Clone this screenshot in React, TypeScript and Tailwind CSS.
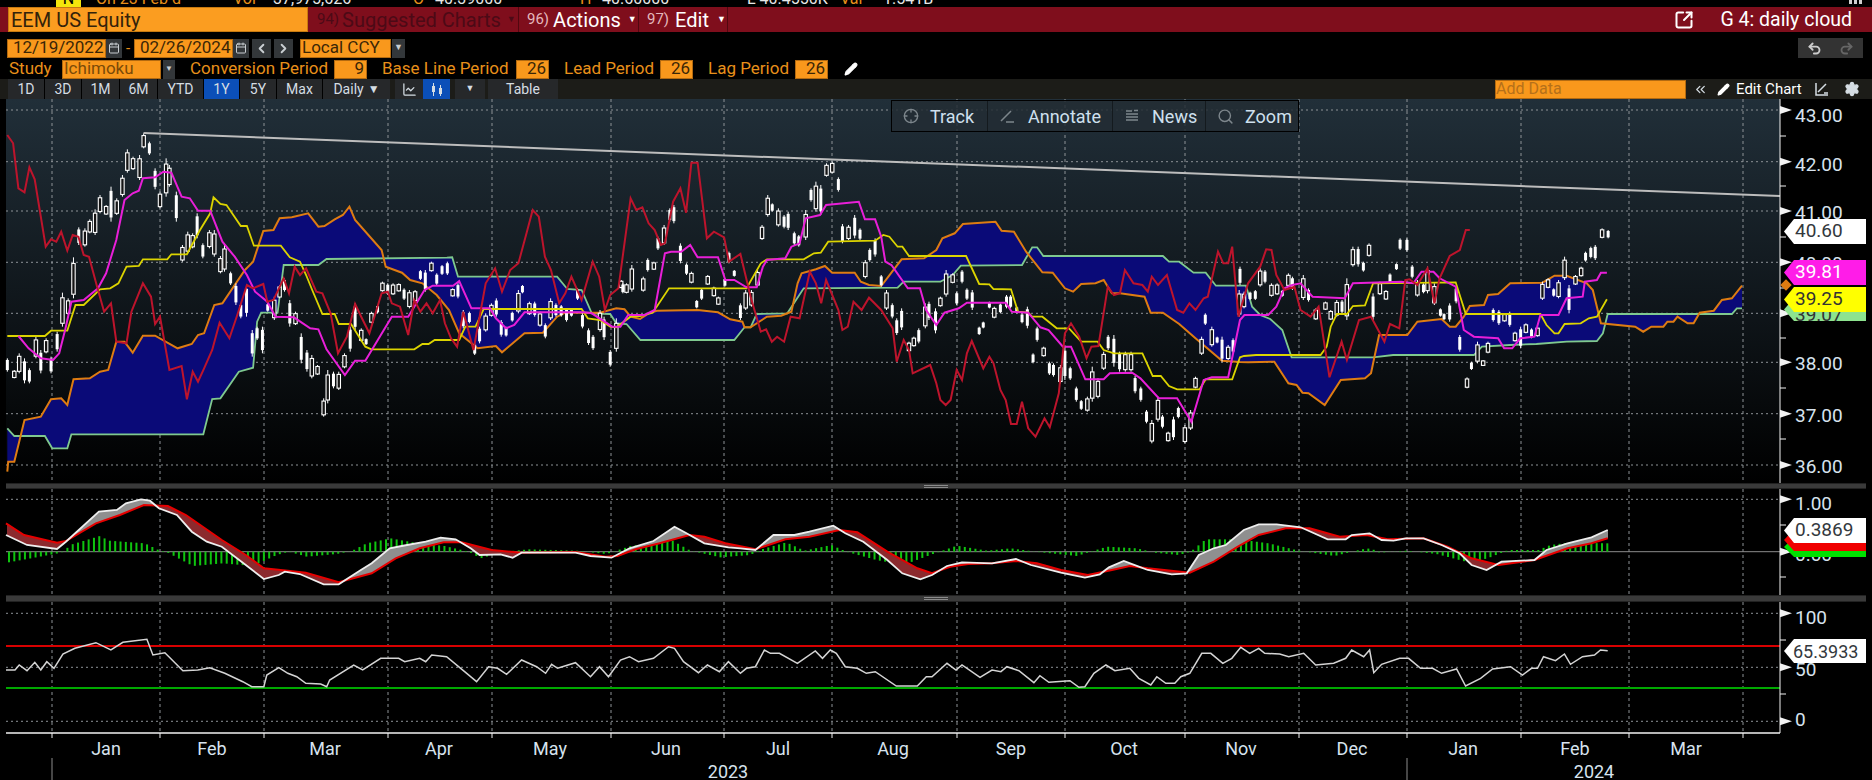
import { Calendar, ChartLine, ChevronLeft, ChevronRight, ChevronsLeft, Crosshair, Pencil, Redo2, Search, Settings, SquareArrowOutUpRight, Undo2 } from 'lucide-react'

type Pt = [number, number]

// traced from the zoomed crops: each panel has its own x offset and scale
const z = (s: string, off: number, k: number, top: number): Pt[] =>
  s.trim().split(/\s+/).map((p) => {
    const [x, y] = p.split(',').map(Number)
    return [off + x / k, top + y / 3] as Pt
  })
const price = (a: string, b: string, c: string): Pt[] => [...z(a, 0, 2.45, 120), ...z(b, 620, 2.45, 120), ...z(c, 1240, 2.48, 120)]
const lower = (a: string, b: string): Pt[] => [...z(a, 0, 1.668, 480), ...z(b, 932, 1.668, 480)]
const path = (pts: Pt[]) => pts.map((p, i) => `${i ? 'L' : 'M'}${p[0].toFixed(1)} ${p[1].toFixed(1)}`).join('')

const lagging = price(
  '18,45 32,70 45,205 60,217 72,142 85,178 112,380 125,358 138,365 150,335 165,392 178,345 192,350 205,405 218,410 238,500 255,575 272,550 285,665 310,670 322,575 350,490 370,530 380,612 392,590 415,750 445,738 458,838 472,755 485,785 500,745 520,690 538,608 562,655 580,590 605,495 620,505 645,492 655,545 670,540 695,475 708,520 722,440 735,465 750,445 775,515 790,520 810,580 828,700 850,650 870,552 885,590 905,640 935,520 950,515 960,550 980,560 1000,645 1015,540 1030,575 1045,550 1060,580 1078,540 1090,610 1105,655 1120,680 1135,575 1160,690 1175,590 1190,490 1213,445 1230,515 1250,450 1270,430 1290,340 1305,270 1320,290 1335,410 1350,450 1370,550 1385,520 1400,470 1425,540 1452,425 1468,470 1482,570 1495,525 1515,505 1545,235',
  '40,270 55,262 70,310 85,330 100,375 110,370 130,245 148,205 162,278 175,128 190,128 213,355 230,335 255,352 267,425 295,402 320,530 345,635 358,628 372,665 385,650 402,665 418,590 440,595 465,455 480,490 493,550 505,480 535,570 545,630 558,620 572,545 592,570 610,533 640,570 668,625 678,725 695,660 708,690 717,760 760,735 775,790 785,840 798,855 810,840 825,750 838,780 850,700 862,663 890,745 905,710 915,730 932,810 945,840 958,912 972,912 985,845 1000,925 1018,950 1040,895 1053,922 1075,820 1090,640 1105,610 1125,650 1143,715 1155,680 1172,678 1195,500 1210,525 1225,520 1237,450 1258,490 1280,495 1293,515 1303,470 1318,495 1340,465 1365,570 1380,578 1395,550 1410,570 1430,535 1440,530 1465,395 1478,430 1490,430 1500,380 1515,590',
  '20,490 50,440 65,388 78,390 90,465 110,510 135,500 150,570 175,590 195,560 222,772 252,665 265,720 295,600 325,590 345,635 358,665 372,612 395,625 410,480 420,478 440,495 465,445 482,550 495,475 520,408 545,390 560,330 570,330',
)
const tenkan = price(
  '45,648 70,685 100,715 130,720 145,700 160,628 175,545 205,540 240,505 260,460 285,360 305,240 325,220 340,212 350,175 380,172 400,155 420,158 445,230 465,235 485,272 515,272 545,365 575,410 605,465 625,515 655,545 675,590 720,592 760,625 780,628 800,688 845,765 870,722 895,722 960,590 1000,590 1040,510 1060,497 1110,497 1125,483 1155,565 1200,565 1215,595 1240,625 1260,615 1285,577 1430,577 1450,580 1500,620 1520,620',
  '20,585 60,585 85,570 110,400 125,395 150,395 172,375 190,412 240,412 258,480 280,480 310,502 335,502 350,440 360,420 405,415 420,380 440,370 455,295 490,285 505,255 585,245 600,298 625,298 640,350 650,425 665,435 705,505 735,505 750,570 775,615 795,578 830,565 850,548 945,548 960,575 1000,578 1030,622 1050,630 1085,680 1105,680 1140,778 1185,778 1200,760 1255,758 1275,775 1320,835 1365,835 1400,905 1430,780 1450,772 1490,772 1519,600',
  '11,585 70,585 90,560 110,505 130,495 150,490 180,530 260,535 280,490 400,485 430,490 450,455 480,455 495,475 535,500 555,630 580,650 640,655 655,685 675,685 695,655 730,650 745,585 790,585 810,535 850,530 855,485 885,480 895,458 910,458',
)
const kijun = price(
  '18,648 110,648 125,632 165,632 185,555 205,555 245,508 270,505 290,490 310,440 340,438 350,418 410,418 420,403 458,403 490,330 515,280 523,232 540,252 555,255 590,318 605,318 622,377 688,377 710,412 735,425 750,465 765,510 790,582 820,582 830,612 860,612 895,680 910,688 1015,688 1035,672 1050,672 1065,660 1125,660 1140,620 1165,620 1185,567 1425,567 1440,595 1470,600 1495,620 1510,622 1545,590',
  '49,588 80,578 120,505 310,505 345,430 360,418 450,418 475,400 492,398 510,365 625,362 645,345 660,350 680,380 692,380 708,408 848,408 880,492 905,493 915,507 958,508 975,575 1000,578 1010,590 1035,590 1070,625 1100,625 1130,665 1170,665 1185,690 1210,700 1280,700 1305,768 1325,768 1345,798 1365,808 1420,808 1435,778 1500,778 1519,712',
  '10,708 40,705 200,705 215,680 225,620 240,582 265,582 280,558 310,556 330,490 535,487 560,582 745,582 760,615 780,640 790,640 805,612 845,610 865,595 885,590 910,538',
)
const spanA = price(
  '18,1055 20,1025 35,1025 60,900 100,890 125,838 150,835 165,855 180,778 220,775 245,755 265,750 285,665 305,665 325,698 350,647 380,647 435,685 470,672 485,645 500,640 525,555 545,550 600,450 620,425 645,333 670,330 685,295 715,292 755,280 780,320 795,318 820,298 840,285 856,260 870,300 935,390 945,440 985,458 1005,480 1035,490 1070,525 1100,570 1125,640 1170,685 1215,678 1230,697 1285,640 1330,638 1365,590 1385,578 1470,578 1510,565 1530,568 1545,590',
  '49,597 70,580 90,572 190,570 240,577 270,598 300,605 305,622 320,622 360,590 395,587 420,575 435,490 445,460 480,448 502,438 520,458 575,458 590,485 610,495 640,498 690,418 745,415 775,390 790,355 820,340 840,312 920,305 935,332 965,335 995,395 1035,457 1060,458 1090,505 1110,515 1130,492 1165,490 1185,480 1205,520 1225,520 1285,530 1300,578 1330,578 1370,612 1410,655 1475,722 1519,726',
  '20,727 85,725 120,790 140,795 155,818 170,820 210,855 250,780 310,775 325,760 345,645 415,645 440,605 500,597 520,620 535,620 555,590 570,558 605,555 615,525 640,522 670,490 750,488 780,467 810,467 860,490 875,510 895,610 980,620 1000,635 1020,620 1050,620 1060,605 1075,605 1085,590 1110,610 1125,610 1140,578 1175,572 1195,540 1220,535 1245,497',
)
const spanB = price(
  '18,925 35,948 110,948 128,985 165,985 175,943 498,943 520,837 540,835 585,755 620,743 630,605 640,578 680,578 695,435 780,435 800,417 1095,413 1108,412 1122,470 1365,470 1390,507 1425,510 1450,580 1495,582 1510,610 1535,612',
  '50,660 280,660 305,622 320,622 335,582 410,580 450,505 680,503 695,485 785,485 815,465 835,437 985,435 1010,382 1022,382 1037,408 1330,408 1345,425 1370,425 1405,458 1435,458 1460,497 1519,497',
  '15,497 30,560 50,585 75,597 105,630 128,712 330,712 380,705 580,705 600,680 670,675 735,672 810,665 885,663 900,640 912,582 1220,582 1232,565 1245,565',
)
const trend: Pt[] = [[143.5, 133], [1780, 196]]

const candleData: [string, number, number][] = [
  ['18,715,755;35,750,775,h;47,700,760,h;60,715,790;72,745,790;88,650,715,h;100,690,760;113,655,700,h;125,710,760;140,635,695;153,518,620,h;167,535,585,h;180,412,535,h;193,322,375;208,325,380,h;220,298,340,h;233,268,345,h;245,225,280,h;260,255,285,h;272,200,305;286,235,285,h;300,165,230,h;312,88,158,h;326,110,150,h;342,105,180,h;352,40,85,h;366,65,105;380,145,208;392,215,265,h;407,115,230,h;415,135,200,h;432,215,305;447,375,425,h;460,335,400,h;472,340,385,h;483,280,355;497,370,415;513,330,385,h;525,330,410,h;540,408,460,h;550,375,455,h;565,455,495;578,490,555;590,550,595;604,495,590;618,630,710;630,620,660;643,620,700;656,550,575;672,530,600,h;685,495,535,h;697,475,515;710,540,620;724,575,615,h;738,640,730;752,690,755;764,705,775,h;778,735,765,h;793,835,890,h;803,750,850,h;817,755,805;830,755,810,h;844,700,745,h;858,620,695;870,550,630;885,625,665,h;897,655,675;910,575,610,h;925,555,580;937,485,515,h;950,490,525;963,490,525,h;977,490,515,h;990,505,540;1003,510,565,h;1017,510,545,h;1030,450,480;1042,450,515;1057,425,455,h;1070,460,495;1083,435,465;1096,425,465;1109,505,530,h;1122,490,535;1135,570,625;1150,575,610;1163,670,705;1175,620,670;1190,580,635,h;1204,550,590,h;1216,535,590;1228,600,650;1240,620,650;1255,575,605;1270,510,580,h;1280,495,520;1297,545,585,h;1310,545,590;1323,575,620,h;1336,610,655;1349,535,600,h;1362,550,590;1375,555,590;1388,565,605;1400,565,590;1415,505,540;1427,580,625;1442,625,675;1453,645,690;1470,570,635,h;1480,590,660;1495,690,740;1510,595,695,h;1522,480,505,h;1535,490,520,h;1548,435,515,h', 0, 2.45],
  ['7,490,520;57,470,515,h;68,415,455;83,425,450,h;93,350,390;108,315,375,h;122,265,305;132,255,310;148,370,430;163,430,465;175,455,490,h;188,540,565;200,505,540;215,465,495,h;230,500,530,h;241,530,555,h;257,475,500;267,395,430;280,450,470;295,550,600;308,510,570,h;322,510,560,h;337,450,500,h;348,315,360,h;362,225,290,h;373,250,275;388,265,320,h;402,285,325;412,275,330;427,335,375;438,345,380;455,270,360,h;468,205,245;480,185,275,h;492,195,285;506,130,170,h;520,125,160,h;535,172,215;545,312,370;560,315,360,h;575,285,355;588,325,360;601,420,475,h;612,385,425;625,355,410;640,465,500;653,510,570,h;667,550,595;678,595,645;690,565,630;708,665,695,h;720,650,680,h;732,625,670;748,550,625,h;757,545,600;773,565,640;785,530,560,h;799,450,530,h;815,460,490,h;825,515,555;838,450,490;850,505,540;863,510,570;880,620,645;890,605,625;905,545,565;917,560,595,h;932,550,580;947,525,565;957,525,565;972,560,580;985,580,610;998,560,625;1012,700,730;1022,620,665;1038,680,710,h;1052,725,765;1062,730,770;1079,735,790,h;1090,680,780;1103,740,780;1118,800,845;1130,840,870;1145,830,875,h;1157,740,845,h;1171,775,835,h;1185,695,750,h;1196,645,690;1210,645,740;1224,695,755;1238,695,755,h;1252,695,755,h;1262,768,820;1276,800,845;1290,870,910;1303,900,970,h;1318,830,905,h;1329,885,925;1343,935,965,h;1356,890,960;1368,860,895;1384,915,970,h;1398,870,930,h;1410,770,805,h;1425,650,705,h;1434,580,615;1450,620,680,h;1463,650,670;1475,650,725;1490,675,720,h;1502,655,700;1517,510,590,h', 620, 2.45],
  ['0,440,495;10,515,565,h;25,515,540;38,510,540;50,445,500,h;62,450,490;78,490,530,h;92,490,525,h;105,510,530;120,460,500,h;130,470,510;157,465,540,h;170,505,545;188,565,600,h;212,545,570,h;225,570,600,h;240,540,590,h;253,540,580;265,475,600,h;280,380,440,h;293,380,440;306,425,455;320,370,410,h;330,520,600;347,485,525,h;362,510,540,h;372,460,490;388,430,450;397,355,390;414,355,395;427,435,475;440,480,530,h;455,490,520;465,440,520,h;482,490,555,h;497,565,590;506,580,600;520,550,605;536,500,550;545,645,695;563,772,805,h;574,725,750;589,665,730,h;603,720,738,h;615,665,700,h;628,565,605;642,570,615;656,580,605,h;669,575,620;682,635,665,h;696,620,685;709,610,640,h;723,625,655;738,620,650,h;750,485,540,h;764,475,505,h;778,505,530;790,480,535,h;805,410,480,h;816,495,580;832,465,495,h;846,440,470,h;857,395,425;870,380,415;881,375,420;898,325,355,h;913,330,355', 1240, 2.48],
]
const candles = candleData.flatMap(([s, off, k]) =>
  s.split(';').map((c) => {
    const [x, t, b, h] = c.split(',')
    return { x: off + Number(x) / k, top: 120 + Number(t) / 3, bot: 120 + Number(b) / 3, hollow: h === 'h' }
  }),
)

const macdLine = lower(
  '10,165 45,195 95,207 110,185 165,95 195,90 210,70 235,58 250,62 265,85 295,105 320,155 345,185 370,200 410,255 440,297 465,285 475,275 500,282 540,313 565,313 600,272 620,250 650,205 670,198 710,185 735,173 760,178 785,205 800,225 835,223 855,233 870,218 960,218 985,228 1020,233 1050,205 1090,183 1125,140 1145,160 1175,190 1215,202 1235,205 1260,210 1290,165 1325,165 1350,155 1390,137 1410,160 1440,185 1480,240 1505,280 1535,298',
  '0,285 25,258 50,247 100,250 140,237 165,255 215,278 255,293 280,283 295,262 320,243 345,260 360,270 400,283 425,280 445,225 470,205 490,195 520,150 545,133 575,133 615,142 660,178 690,178 700,165 730,160 750,180 770,182 790,175 820,175 850,195 880,220 900,255 925,270 950,245 1005,240 1025,210 1060,190 1100,172 1127,150',
)
const signalLine = lower(
  '10,130 40,165 95,188 110,183 160,130 200,105 240,75 280,78 310,105 370,180 410,225 440,265 480,272 510,278 565,307 620,280 660,235 700,205 740,187 770,187 820,210 870,218 960,216 1010,230 1030,228 1060,208 1100,190 1150,165 1175,170 1210,190 1260,208 1310,178 1350,170 1400,150 1430,157 1480,215 1530,265',
  '0,280 30,260 60,252 100,250 140,243 175,250 215,270 260,285 300,270 330,258 360,265 430,278 470,245 510,200 545,165 590,145 630,145 680,170 725,165 760,178 820,175 860,200 900,235 945,255 1005,240 1060,205 1100,190 1127,175',
)
const histTop = lower(
  '10,248 50,235 95,220 105,215 115,195 165,168 180,182 240,190 265,212 275,215 320,258 370,250 420,258 460,225 480,215 510,230 560,222 585,213 610,190 650,175 690,188 740,198 780,215 800,235 840,215 880,208 960,212 1010,222 1050,198 1120,182 1150,212 1200,232 1250,225 1265,210 1310,187 1340,212 1385,195 1410,215 1460,240 1505,255',
  '0,222 40,197 90,212 130,205 170,215 240,228 290,200 340,205 370,218 410,225 430,215 455,178 510,178 560,190 610,212 670,228 715,208 730,205 745,218 790,212 840,222 895,248 925,235 960,210 1010,210 1030,195 1060,188 1127,190',
)
const rsiLine = lower(
  '10,570 25,570 32,555 45,572 58,547 68,570 78,545 90,565 105,522 125,505 160,488 185,510 205,487 245,478 255,525 275,518 305,572 330,570 350,563 375,580 405,605 420,620 440,620 445,585 465,563 480,580 495,590 510,610 535,612 545,620 550,600 590,555 605,570 635,535 665,535 675,545 700,535 710,545 720,525 745,530 775,575 795,605 815,560 830,565 845,583 870,540 895,560 910,580 920,553 930,565 960,548 985,590 1000,560 1015,590 1035,540 1050,530 1065,545 1090,535 1115,500 1125,505 1140,545 1165,578 1180,555 1200,575 1215,545 1235,580 1245,565 1260,560 1275,510 1285,520 1300,520 1330,550 1360,513 1372,535 1385,510 1395,520 1410,560 1430,565 1445,580 1460,575 1495,618 1530,618 1545,590',
  '0,590 25,550 40,570 50,555 80,592 100,570 115,575 125,560 145,572 170,608 180,587 195,607 230,602 245,622 255,620 270,580 290,555 305,572 330,565 345,595 365,615 375,590 390,610 405,610 415,590 430,580 450,520 465,520 485,550 500,535 515,502 530,520 545,505 555,520 580,522 595,530 620,520 640,555 670,550 690,535 700,510 720,530 730,510 737,578 750,553 780,535 795,535 815,565 835,565 850,580 875,567 890,618 915,595 935,567 965,560 985,585 1000,565 1010,565 1020,530 1040,542 1055,522 1065,553 1085,530 1105,525 1115,510 1127,512',
)

const at = (line: Pt[], x: number) => {
  for (let i = 1; i < line.length; i++) {
    if (x <= line[i][0]) {
      const [x0, y0] = line[i - 1]
      const [x1, y1] = line[i]
      return y0 + ((y1 - y0) * (x - x0)) / (x1 - x0 || 1)
    }
  }
  return line[line.length - 1][1]
}

// gray where macd sits above its signal, dark red where below
const macdFill = (above: boolean) => {
  let d = ''
  for (let x = 7; x < 1608; x += 1) {
    const a = at(macdLine, x)
    const b = at(signalLine, x)
    if (a < b === above) d += `M${x} ${a.toFixed(1)}L${x + 1} ${a.toFixed(1)}L${x + 1} ${b.toFixed(1)}L${x} ${b.toFixed(1)}Z`
  }
  return d
}

const gridX = [52, 160, 264, 388, 492, 611, 724, 832, 957, 1065, 1185, 1299, 1407, 1521, 1629, 1743]

function Grid({ rows, top, bottom }: { rows: number[]; top: number; bottom: number }) {
  return (
    <g stroke="#8d9296" strokeWidth="1">
      {rows.map((y) => (
        <line key={y} x1="6" x2="1780" y1={y} y2={y} strokeDasharray="2 3" />
      ))}
      {gridX.map((x) => (
        <line key={x} x1={x} x2={x} y1={top} y2={bottom} strokeDasharray="3 3" />
      ))}
    </g>
  )
}

function AxisTick({ y, major }: { y: number; major?: boolean }) {
  return major ? (
    <path d={`M1780 ${y - 4}L1792 ${y}L1780 ${y + 4}Z`} fill="#f2f2f2" />
  ) : (
    <line x1="1780" x2="1786" y1={y} y2={y} stroke="#f2f2f2" />
  )
}

function AxisText({ y, children }: { y: number; children: string }) {
  return (
    <text x="1795" y={y} fill="#d7e3ee" fontSize="19">
      {children}
    </text>
  )
}

function Tag({ text, className, top }: { text?: string; className: string; top: string }) {
  return (
    <div className={`absolute right-[6px] w-[82px] flex items-center whitespace-nowrap [clip-path:polygon(10px_0,100%_0,100%_100%,10px_100%,0_50%)] ${className} ${top}`}>
      {text}
    </div>
  )
}

function Field({ children, className = '' }: { children?: React.ReactNode; className?: string }) {
  return <div className={`h-[19px] flex items-center bg-[#f9981c] border border-[#b36a10] text-[#3b2606] text-[17px] overflow-hidden whitespace-nowrap ${className}`}>{children}</div>
}

function Label({ children, className = '' }: { children: string; className?: string }) {
  return <span className={`text-[#e8901a] text-[17px] whitespace-nowrap ${className}`}>{children}</span>
}

function SmallBtn({ children, className = '' }: { children?: React.ReactNode; className?: string }) {
  return <div className={`h-[19px] flex items-center justify-center bg-[#33373a] text-[#c9ced2] ${className}`}>{children}</div>
}

function Gutter({ className }: { className: string }) {
  return (
    <div className={`bg-[#3a3a3a] mx-[6px] border-y border-[#222] flex items-center justify-center ${className}`}>
      <div className="w-[24px] h-[3px] border-y border-[#8a8a8a]" />
    </div>
  )
}

const ranges: [string, string][] = [
  ['1D', 'w-[37px] bg-[#26282a]'],
  ['3D', 'w-[37px] bg-[#26282a]'],
  ['1M', 'w-[38px] bg-[#26282a]'],
  ['6M', 'w-[38px] bg-[#26282a]'],
  ['YTD', 'w-[46px] bg-[#26282a]'],
  ['1Y', 'w-[36px] bg-[#0b4fb8]'],
  ['5Y', 'w-[37px] bg-[#26282a]'],
  ['Max', 'w-[46px] bg-[#26282a]'],
]

const months: [string, number][] = [
  ['Jan', 106], ['Feb', 212], ['Mar', 325], ['Apr', 439], ['May', 550], ['Jun', 666], ['Jul', 778], ['Aug', 893],
  ['Sep', 1011], ['Oct', 1124], ['Nov', 1241], ['Dec', 1352], ['Jan', 1463], ['Feb', 1575], ['Mar', 1686],
]

export default function App() {
  return (
    <div className="w-[1872px] h-[780px] overflow-hidden bg-black font-[Roboto,sans-serif]">
      {/* cut off quote line */}
      <div className="h-[7px] overflow-hidden flex pl-[56px] pr-[10px]">
        <div className="flex items-center -mt-[9px] h-[16px] text-[16px] whitespace-nowrap text-[#e8e8e8]">
          <span className="w-[25px] bg-[#f4e60c] text-black text-center mr-[15px]">N</span>
          <span className="text-[#e8901a] w-[137px]">On 23 Feb d</span>
          <span className="text-[#e8901a] w-[40px]">Vol</span>
          <span className="w-[140px]">37,975,626</span>
          <span className="text-[#e8901a] w-[22px]">O</span>
          <span className="w-[145px]">40.39000</span>
          <span className="text-[#e8901a] w-[22px]">H</span>
          <span className="w-[145px]">40.60000</span>
          <span className="w-[73px]">L 40.4550K</span>
          <span className="text-[#e8901a] ml-[20px] w-[43px]">Val</span>
          <span>1.541B</span>
        </div>
        <div className="ml-auto flex gap-[2px] h-[4px]">
          <div className="w-[3px] bg-[#cfcfcf]" />
          <div className="w-[3px] bg-[#cfcfcf]" />
          <div className="w-[3px] bg-[#cfcfcf]" />
        </div>
      </div>

      {/* red title bar */}
      <div className="h-[25px] bg-[#7f0e1c] flex items-center pl-[8px] pr-[20px] text-[20px] whitespace-nowrap">
        <div className="w-[300px] h-full bg-[#fb9d20] border border-[#c87a10] text-[#33220a] flex items-center pl-[2px]">EEM US Equity</div>
        <div className="w-[211px] h-full flex items-center pl-[9px] border-r border-[#52070f] text-[#4c0a16]">
          <span className="text-[15px] mr-[3px]">94)</span>Suggested Charts
          <span className="text-[9px] ml-[6px]">▼</span>
        </div>
        <div className="w-[120px] h-full flex items-center pl-[8px] border-r border-[#52070f] text-white">
          <span className="text-[15px] text-[#e4b8bc] mr-[4px]">96)</span>Actions
          <span className="text-[9px] ml-[7px]">▼</span>
        </div>
        <div className="w-[89px] h-full flex items-center pl-[8px] border-r border-[#52070f] text-white">
          <span className="text-[15px] text-[#e4b8bc] mr-[6px]">97)</span>Edit
          <span className="text-[9px] ml-[8px]">▼</span>
        </div>
        <SquareArrowOutUpRight className="ml-auto mr-[26px] text-white" size={20} strokeWidth={2.4} />
        <span className="text-white text-[19.5px]">G 4: daily cloud</span>
      </div>

      {/* date range */}
      <div className="h-[20px] mt-[6px] flex items-center pl-[7px]">
        <Field className="w-[99px] pl-[5px]">12/19/2022</Field>
        <SmallBtn className="w-[16px]"><Calendar size={12} /></SmallBtn>
        <span className="w-[12px] text-center text-[#e8901a] text-[15px]">-</span>
        <Field className="w-[99px] pl-[5px]">02/26/2024</Field>
        <SmallBtn className="w-[16px]"><Calendar size={12} /></SmallBtn>
        <SmallBtn className="w-[19px] ml-[3px]"><ChevronLeft size={15} strokeWidth={3} /></SmallBtn>
        <SmallBtn className="w-[19px] ml-[3px]"><ChevronRight size={15} strokeWidth={3} /></SmallBtn>
        <Field className="w-[91px] ml-[7px] pl-[1px]">Local CCY</Field>
        <SmallBtn className="w-[13px] ml-[1px] text-[9px]">▼</SmallBtn>
        <div className="ml-auto mr-[9px] w-[65px] h-[20px] bg-[#333] flex items-center justify-around text-[#ccc]">
          <Undo2 size={15} strokeWidth={3} />
          <Redo2 size={15} strokeWidth={3} className="text-[#666]" />
        </div>
      </div>

      {/* study row */}
      <div className="h-[20px] mt-[1px] flex items-center pl-[9px]">
        <Label className="w-[53px]">Study</Label>
        <Field className="w-[99px] pl-[1px] text-[#7a4a08]">Ichimoku</Field>
        <SmallBtn className="w-[12px] ml-[2px] text-[8px]">▼</SmallBtn>
        <Label className="ml-[15px] w-[144px]">Conversion Period</Label>
        <Field className="w-[33px] justify-end pr-[2px]">9</Field>
        <Label className="ml-[15px] w-[134px]">Base Line Period</Label>
        <Field className="w-[33px] justify-end pr-[2px]">26</Field>
        <Label className="ml-[15px] w-[96px]">Lead Period</Label>
        <Field className="w-[33px] justify-end pr-[2px]">26</Field>
        <Label className="ml-[15px] w-[87px]">Lag Period</Label>
        <Field className="w-[33px] justify-end pr-[2px]">26</Field>
        <Pencil className="ml-[16px] text-white" size={14} fill="white" />
      </div>

      {/* range toolbar */}
      <div className="h-[20px] bg-[#1c1c18] flex items-center pl-[8px] text-[14px] text-[#d5dde3]">
        {ranges.map(([label, w]) => (
          <div key={label} className={`h-full flex items-center justify-center border-r border-black ${w}`}>{label}</div>
        ))}
        <div className="h-full w-[67px] flex items-center justify-center bg-[#26282a] gap-[4px]">Daily <span className="text-[12px]">▼</span></div>
        <div className="h-full w-[28px] ml-[5px] flex items-center justify-center bg-[#26282a]"><ChartLine size={15} /></div>
        <div className="h-full w-[27px] flex items-center justify-center bg-[#0b4fb8]">
          <svg width="14" height="15" viewBox="0 0 14 15" fill="#d5dde3"><rect x="2" y="4" width="3" height="6" /><rect x="3" y="1" width="1" height="13" /><rect x="9" y="6" width="3" height="6" /><rect x="10" y="3" width="1" height="11" /></svg>
        </div>
        <div className="h-full w-[30px] ml-[5px] flex items-center justify-center bg-[#26282a] text-[9px]">▼</div>
        <div className="h-full w-[70px] ml-[3px] flex items-center justify-center bg-[#26282a]">Table</div>
        <div className="ml-[937px] w-[191px] h-[19px] bg-[#f9981c] border border-[#b36a10] text-[#b5701a] text-[16px] flex items-center">Add Data</div>
        <ChevronsLeft className="ml-[7px]" size={15} />
        <Pencil className="ml-[9px] text-white" size={13} fill="white" />
        <span className="ml-[6px] text-white text-[15px] whitespace-nowrap">Edit Chart</span>
        <svg className="ml-[12px]" width="16" height="14" viewBox="0 0 16 14" fill="none" stroke="#d5dde3"><path d="M2 1v12h12M4 10l8-8M10 11h4" strokeWidth="1.5" /></svg>
        <Settings className="ml-[14px]" size={16} fill="#d5dde3" />
      </div>

      {/* price panel */}
      <div className="relative h-[384px]">
        <svg className="block" width="1872" height="384" viewBox="0 99 1872 384">
          <defs>
            <linearGradient id="panelBg" x1="0" x2="0" y1="0" y2="1">
              <stop offset="0" stopColor="#212f39" />
              <stop offset="1" stopColor="#000000" />
            </linearGradient>
          </defs>
          <rect x="6" y="99" width="1774" height="384" fill="url(#panelBg)" />
          <Grid rows={[110, 161.7, 211, 262.3, 313.3, 362.3, 413.7, 465]} top={99} bottom={483} />
          <path d={path([...spanA, ...[...spanB].reverse()]) + 'Z'} fill="#0a0a78" />
          <path d={path(spanB)} fill="none" stroke="#7fc98f" strokeWidth="1.8" />
          <path d={path(spanA)} fill="none" stroke="#de7c12" strokeWidth="2" />
          {candles.map((c, i) => {
            const h = c.bot - c.top
            return (
              <g key={i}>
                <line x1={c.x} x2={c.x} y1={c.top} y2={c.bot} stroke="#fff" strokeWidth="1" />
                {c.hollow ? (
                  <rect x={c.x - 1.7} y={c.top + h * 0.15} width="3.4" height={h * 0.75} fill="#141414" stroke="#fff" strokeWidth="1.1" />
                ) : (
                  <rect x={c.x - 1.5} y={c.top + h * 0.12} width="3" height={h * 0.76} fill="#fff" />
                )}
              </g>
            )
          })}
          <path d={path(kijun)} fill="none" stroke="#dcd400" strokeWidth="1.8" />
          <path d={path(tenkan)} fill="none" stroke="#e81fd8" strokeWidth="2" />
          <path d={path(lagging)} fill="none" stroke="#bd142c" strokeWidth="2" />
          <path d={path(trend)} fill="none" stroke="#bdbdbd" strokeWidth="2" />
          <line x1="1780" x2="1780" y1="99" y2="483" stroke="#f2f2f2" />
          {[110, 161.7, 211, 262.3, 313.3, 362.3, 413.7, 465].map((y) => <AxisTick key={y} y={y} major />)}
          {[136, 186, 237, 288, 338, 388, 439].map((y) => <AxisTick key={y} y={y} />)}
          <AxisText y={122}>43.00</AxisText>
          <AxisText y={171}>42.00</AxisText>
          <AxisText y={219}>41.00</AxisText>
          <AxisText y={270}>40.00</AxisText>
          <AxisText y={321}>39.00</AxisText>
          <AxisText y={370}>38.00</AxisText>
          <AxisText y={422}>37.00</AxisText>
          <AxisText y={473}>36.00</AxisText>
        </svg>

        {/* hover toolbar */}
        <div className="absolute left-[891px] top-[1px] w-[408px] h-[32px] flex items-center bg-[#232d34]/85 border border-black text-[18px] text-[#cfe0ee]">
          <div className="w-[96px] h-full flex items-center pl-[11px] gap-[11px] border-r border-[#141a1e]"><Crosshair size={16} className="text-[#7d868c]" />Track</div>
          <div className="w-[125px] h-full flex items-center pl-[11px] gap-[13px] border-r border-[#141a1e]">
            <svg width="16" height="16" viewBox="0 0 16 16" fill="none" stroke="#7d868c" strokeWidth="1.5"><path d="M2 13L12 3M7 14h8" /></svg>Annotate
          </div>
          <div className="w-[93px] h-full flex items-center pl-[11px] gap-[12px] border-r border-[#141a1e]">
            <svg width="16" height="16" viewBox="0 0 16 16" stroke="#7d868c" strokeWidth="1.4"><path d="M2 3h6M2 6h12M2 9h12M2 12h12M10 2.5h4" /></svg>News
          </div>
          <div className="flex-1 h-full flex items-center pl-[11px] gap-[11px]"><Search size={17} className="text-[#7d868c]" />Zoom</div>
        </div>

        <Tag text="40.60" top="top-[120px]" className="h-[25px] pl-[11px] text-[19px] bg-white text-[#33383d]" />
        <div className="absolute left-[1782px] top-[182px] w-[8px] h-[8px] rotate-45 bg-[#de7c12]" />
        <Tag text="39.07" top="top-[199px]" className="h-[23px] pl-[11px] pt-[12px] text-[19px] bg-[#8de38f] text-[#333]" />
        <Tag text="39.81" top="top-[161px]" className="h-[25px] pl-[11px] text-[19px] bg-[#ff1ce8] text-white" />
        <Tag text="39.25" top="top-[188px]" className="h-[25px] pl-[11px] text-[19px] bg-[#ffff00] text-[#333]" />
      </div>

      <Gutter className="h-[6px]" />

      {/* macd panel */}
      <div className="relative h-[106px]">
        <svg className="block" width="1872" height="106" viewBox="0 489 1872 106">
          <Grid rows={[499.3]} top={489} bottom={595} />
          <line x1="6" x2="1780" y1="551.7" y2="551.7" stroke="#8c8c8c" />
          {Array.from({ length: 302 }, (_, i) => 8 + i * 5.31).map((x) => (
            <rect key={x} x={x} width="2" y={Math.min(at(histTop, x), 551.7)} height={Math.abs(at(histTop, x) - 551.7)} fill="#0fc40f" />
          ))}
          <path d={macdFill(true)} fill="#8f8f8f" />
          <path d={macdFill(false)} fill="#8b2a2e" />
          <path d={path(signalLine)} fill="none" stroke="#e60000" strokeWidth="2" />
          <path d={path(macdLine)} fill="none" stroke="#eeeeee" strokeWidth="1.8" />
          <line x1="1780" x2="1780" y1="489" y2="595" stroke="#f2f2f2" />
          <AxisTick y={499.3} major />
          <AxisTick y={551.7} major />
          <AxisTick y={525} />
          <AxisTick y={577} />
          <AxisText y={510}>1.00</AxisText>
          <AxisText y={561}>0.00</AxisText>
        </svg>
        <Tag top="top-[48px]" className="h-[20px] bg-[#00e000]" />
        <Tag top="top-[40px]" className="h-[22px] bg-[#f00000]" />
        <Tag text="0.3869" top="top-[29px]" className="h-[25px] pl-[11px] text-[19px] bg-white text-[#33383d]" />
      </div>

      <Gutter className="h-[7px]" />

      {/* rsi panel */}
      <div className="relative h-[178px]">
        <svg className="block" width="1872" height="178" viewBox="0 602 1872 178">
          <Grid rows={[613.3, 667.3, 721.3]} top={602} bottom={733} />
          <line x1="6" x2="1780" y1="646" y2="646" stroke="#d80000" strokeWidth="2" />
          <line x1="6" x2="1780" y1="688" y2="688" stroke="#00a800" strokeWidth="2" />
          <path d={path(rsiLine)} fill="none" stroke="#d4d4d4" strokeWidth="1.5" />
          <line x1="1780" x2="1780" y1="602" y2="733" stroke="#f2f2f2" />
          <line x1="6" x2="1780" y1="733" y2="733" stroke="#f2f2f2" strokeWidth="1.6" />
          {gridX.map((x) => <line key={x} x1={x} x2={x} y1="733" y2="738" stroke="#f2f2f2" />)}
          <AxisTick y={613.3} major />
          <AxisTick y={667.3} major />
          <AxisTick y={721.3} major />
          <AxisTick y={640} />
          <AxisTick y={694} />
          <AxisText y={624}>100</AxisText>
          <AxisText y={676}>50</AxisText>
          <AxisText y={726}>0</AxisText>
          <line x1="52" x2="52" y1="758" y2="780" stroke="#8c8c8c" />
          <line x1="1407" x2="1407" y1="758" y2="780" stroke="#8c8c8c" />
          {months.map(([m, x]) => (
            <text key={m + x} x={x} y="755" fill="#d7e3ee" fontSize="18" textAnchor="middle">{m}</text>
          ))}
          <text x="728" y="778" fill="#d7e3ee" fontSize="18" textAnchor="middle">2023</text>
          <text x="1594" y="778" fill="#d7e3ee" fontSize="18" textAnchor="middle">2024</text>
        </svg>
        <Tag text="65.3933" top="top-[37px]" className="h-[24px] pl-[9px] text-[18px] bg-white text-[#33383d]" />
      </div>
    </div>
  )
}
